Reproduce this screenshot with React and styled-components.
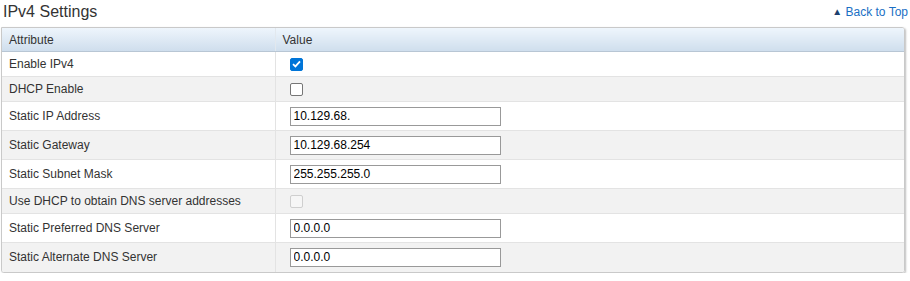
import React from "react";
import styled, {createGlobalStyle} from "styled-components";

const GlobalStyle = createGlobalStyle`
    body {
        margin: 0;
        background: #fff;
        font-family: "Liberation Sans", Arial, sans-serif;
        color: #333;
    }
`

const rows = [
    {label: 'Enable IPv4', type: 'check', checked: true},
    {label: 'DHCP Enable', type: 'check'},
    {label: 'Static IP Address', type: 'text', value: '10.129.68.'},
    {label: 'Static Gateway', type: 'text', value: '10.129.68.254'},
    {label: 'Static Subnet Mask', type: 'text', value: '255.255.255.0'},
    {label: 'Use DHCP to obtain DNS server addresses', type: 'check', disabled: true},
    {label: 'Static Preferred DNS Server', type: 'text', value: '0.0.0.0'},
    {label: 'Static Alternate DNS Server', type: 'text', value: '0.0.0.0'},
]

const App = () => {
    return (
        <>
            <GlobalStyle/>
            <Section>
                <TitleBar>
                    <Title>IPv4 Settings</Title>
                    <BackLink href="#top"><Arrow>▲</Arrow> Back to Top</BackLink>
                </TitleBar>
                <Panel>
                    <Table>
                        <colgroup>
                            <col style={{width: 273}}/>
                            <col/>
                        </colgroup>
                        <thead>
                        <tr>
                            <HeadCell>Attribute</HeadCell>
                            <HeadCell>Value</HeadCell>
                        </tr>
                        </thead>
                        <tbody>
                        {rows.map((row, i) => (
                            <Row key={row.label} $odd={i % 2 === 1} $tall={row.type === 'text'}>
                                <LabelCell>{row.label}</LabelCell>
                                <ValueCell>
                                    {row.type === 'check'
                                        ? <CheckBox checked={!!row.checked} disabled={row.disabled}/>
                                        : <TextInput defaultValue={row.value}/>}
                                </ValueCell>
                            </Row>
                        ))}
                        </tbody>
                    </Table>
                </Panel>
            </Section>
        </>
    )
}

const CheckBox = ({checked, disabled}) => (
    <Box $checked={checked} $disabled={disabled}>
        {checked && (
            <svg width="9" height="8" viewBox="0 0 9 8">
                <path d="M1 4.2 L3.4 6.4 L8 1.4" fill="none" stroke="#fff" strokeWidth="1.8"/>
            </svg>
        )}
    </Box>
)

const Section = styled.div`
    width: 908px;
    padding: 0 0 0 1px;
`

const TitleBar = styled.div`
    display: flex;
    justify-content: space-between;
    align-items: flex-end;
    height: 27px;
`

const Title = styled.h2`
    margin: 0 0 6px 2px;
    font-size: 16px;
    font-weight: normal;
    color: #333;
    line-height: 18px;
`

const BackLink = styled.a`
    align-self: flex-start;
    margin-top: 5px;
    margin-right: 1px;
    font-size: 12px;
    color: #1a6fc4;
    text-decoration: none;
    line-height: 14px;
`

const Arrow = styled.span`
    font-size: 10px;
    color: #1d3f6e;
    vertical-align: 1px;
`

const Panel = styled.div`
    width: 902px;
    border: 1px solid #c9c9c9;
    border-radius: 0 3px 3px 3px;
    box-shadow: 1px 1px 2px rgba(0, 0, 0, 0.25);
    overflow: hidden;
`

const Table = styled.table`
    width: 100%;
    border-collapse: collapse;
    font-size: 12px;
`

const HeadCell = styled.th`
    height: 23px;
    padding: 0 7px;
    text-align: left;
    font-weight: normal;
    color: #333;
    background: linear-gradient(#eef5fc, #cfdeed);
    border-bottom: 1px solid #b8c6d4;
    & + & {
        border-left: 1px solid #e2e8ee;
    }
`

const Row = styled.tr`
    height: ${p => p.$tall ? 29 : 25}px;
    background: ${p => p.$odd ? '#f2f2f2' : '#fff'};
    border-top: 1px solid #e3e3e3;
    &:first-child {
        border-top: none;
    }
`

const LabelCell = styled.td`
    padding: 0 7px;
    color: #333;
    border-right: 1px solid #e3e3e3;
`

const ValueCell = styled.td`
    padding: 0 0 0 14px;
    vertical-align: middle;
`

const Box = styled.span`
    display: flex;
    align-items: center;
    justify-content: center;
    box-sizing: border-box;
    width: 13px;
    height: 13px;
    border-radius: 2px;
    background: ${p => p.$checked ? '#0075d8' : '#fff'};
    border: 1px solid ${p => p.$checked ? '#0075d8' : p.$disabled ? '#cfcfcf' : '#767676'};
    ${p => p.$disabled && 'background: #f6f6f6;'}
`

const TextInput = styled.input`
    display: block;
    box-sizing: border-box;
    width: 211px;
    height: 19px;
    padding: 0 3px;
    border: 1px solid #999;
    font-family: "Liberation Sans", Arial, sans-serif;
    font-size: 12px;
    color: #000;
    outline: none;
`

export default App
